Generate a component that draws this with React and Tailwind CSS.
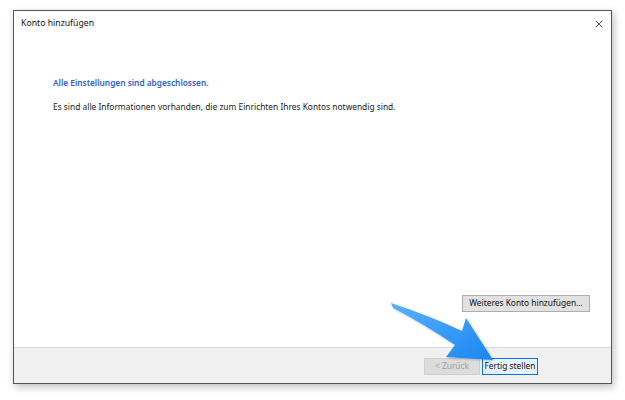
import { X } from 'lucide-react'

const FONT = { fontFamily: '"Segoe UI", "Noto Sans", "Open Sans", sans-serif' }

function Arrow() {
  return (
    <svg className="pointer-events-none absolute left-0 top-0" width="625" height="400" viewBox="0 0 625 400">
      <defs>
        <linearGradient id="arrowFill" x1="0" y1="0" x2="1" y2="1">
          <stop offset="0%" stopColor="#5ab0ff" />
          <stop offset="100%" stopColor="#1a86f2" />
        </linearGradient>
        <filter id="arrowShadow" x="-20%" y="-20%" width="140%" height="140%">
          <feDropShadow dx="1" dy="1" stdDeviation="1" floodColor="#000" floodOpacity="0.25" />
        </filter>
      </defs>
      <path
        d="M391 303 Q430 316 462 331 L466 318 L493 360 L446 357 L455 345 Q422 323 393 308 Z"
        fill="url(#arrowFill)"
        filter="url(#arrowShadow)"
      />
    </svg>
  )
}

export default function App() {
  return (
    <div className="relative h-[400px] w-[625px] overflow-hidden bg-white pl-[13px] pt-[10px]" style={FONT}>
      <div className="flex h-[374px] w-[599px] flex-col border border-[#555] bg-white shadow-[2px_3px_8px_rgba(0,0,0,0.25)]">
        <div className="flex h-[24px] items-center justify-between pl-[7px] pr-[6px] pt-[1px] text-[8.7px] text-[#111]">
          <span>Konto hinzufügen</span>
          <X size={12} strokeWidth={1.5} className="text-[#222]" />
        </div>

        <div className="flex flex-1 flex-col pl-[39px] pt-[42px] pr-[21px] pb-[35px]">
          <p className="text-[8.3px] font-semibold text-[#2f63c8]">Alle Einstellungen sind abgeschlossen.</p>
          <p className="mt-[12px] text-[8.4px] text-[#1a1a1a]">
            Es sind alle Informationen vorhanden, die zum Einrichten Ihres Kontos notwendig sind.
          </p>
          <div className="mt-auto flex justify-end">
            <button
              type="button"
              className="h-[17px] w-[128px] whitespace-nowrap border border-[#adadad] bg-[#e1e1e1] text-[8.4px] leading-none text-[#111]"
            >
              Weiteres Konto hinzufügen...
            </button>
          </div>
        </div>

        <div className="flex h-[36px] items-center justify-end gap-[2px] border-t border-[#dadada] bg-[#f0f0f0] pr-[73px] pt-[1px]">
          <button
            type="button"
            disabled
            className="h-[17px] w-[56px] whitespace-nowrap border border-[#cfcfcf] bg-[#dcdcdc] text-[8.4px] leading-none text-[#a0a0a0]"
          >
            &lt; Zurück
          </button>
          <button
            type="button"
            className="h-[17px] w-[56px] whitespace-nowrap border border-[#0a74d6] bg-[#e5f1fb] text-[8.4px] leading-none text-[#111]"
          >
            Fertig stellen
          </button>
        </div>
      </div>
      <Arrow />
    </div>
  )
}
